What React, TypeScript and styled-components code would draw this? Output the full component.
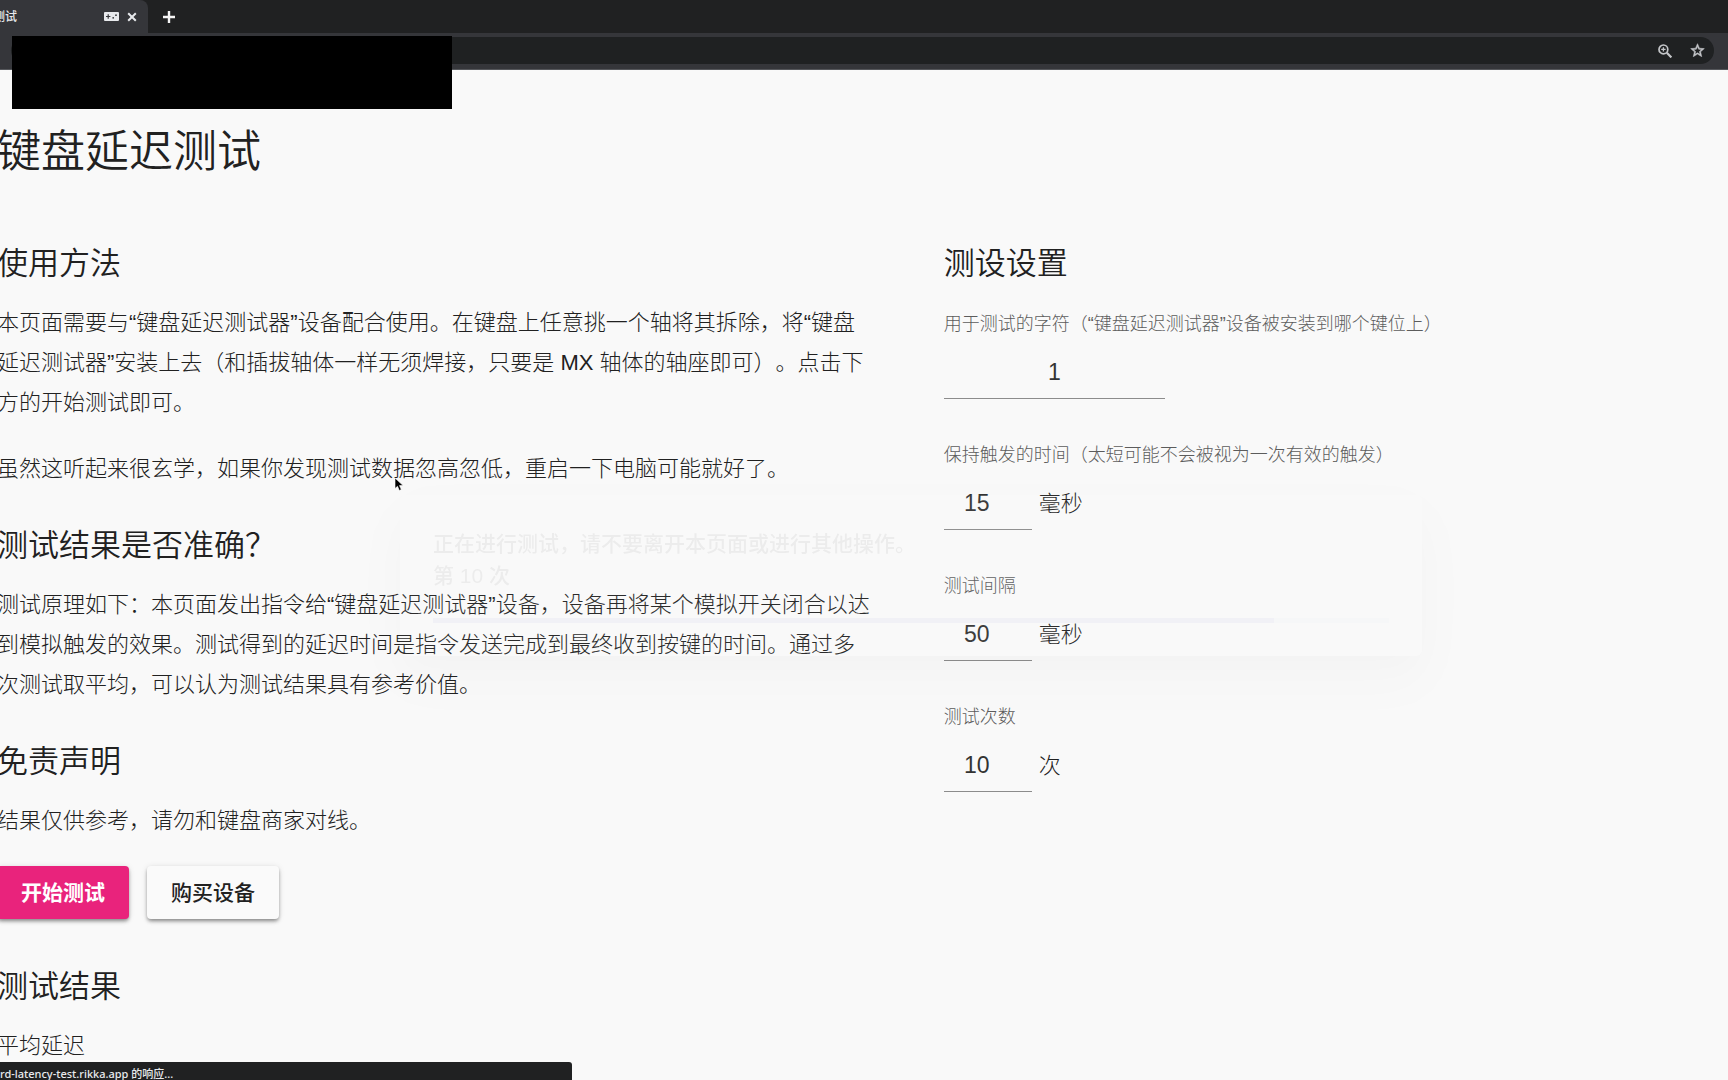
import React, { useState } from "react";
import styled, { createGlobalStyle, css } from "styled-components";

const sans = `"Liberation Sans", "Noto Sans CJK SC", sans-serif`;
const chromeSans = `"Noto Sans", "Noto Sans CJK SC", sans-serif`;

const GlobalStyle = createGlobalStyle`
  *, *::before, *::after { box-sizing: border-box; }
  body {
    margin: 0;
    overflow: hidden;
    background: #f9f9f9;
    color: #212121;
    font-family: ${sans};
    font-weight: 300;
    text-spacing-trim: space-all;
  }
  h1, h2, p { margin: 0; }
`;

const Frame = styled.div`
  display: flex;
  flex-direction: column;
  min-height: 100vh;
  overflow: hidden;
`;

const TabStrip = styled.div`
  display: flex;
  height: 33px;
  background: #202122;
`;

const Tab = styled.div`
  display: flex;
  align-items: center;
  gap: 6px;
  width: 148px;
  padding-right: 9px;
  border-radius: 0 8px 0 0;
  background: #35363a;
  color: #e8eaed;
`;

const TabTitle = styled.span`
  flex: 1;
  margin-left: -7px;
  font: 500 12px/16px ${chromeSans};
`;

const IconButton = styled.button<{ $size: number }>`
  display: flex;
  align-items: center;
  justify-content: center;
  width: ${(p) => p.$size}px;
  height: ${(p) => p.$size}px;
  padding: 0;
  border: 0;
  background: none;
  color: inherit;
`;

const NewTab = styled.div`
  display: flex;
  align-items: center;
  padding-left: 11px;
  color: #f5f5f5;
`;

const Toolbar = styled.div`
  height: 37px;
  padding: 4px 14px 5px 11px;
  border-bottom: 1px solid #55575b;
  background: #35363a;
`;

const AddressBar = styled.div`
  display: flex;
  align-items: center;
  justify-content: flex-end;
  gap: 12px;
  height: 27px;
  padding-right: 7px;
  border-radius: 14px;
  background: #1f2122;
  color: #c4c6c9;
`;

const Redaction = styled.div`
  position: absolute;
  top: 36px;
  left: 12px;
  width: 440px;
  height: 73px;
  background: #000;
`;

const Page = styled.main`
  flex: 1;
  margin-left: -3px;
  padding: 52px 0 12px;
`;

const Title = styled.h1`
  margin-bottom: 62px;
  font-size: 44px;
  font-weight: 350;
  line-height: 60px;
`;

const Columns = styled.div`
  display: grid;
  grid-template-columns: 54.7% 1fr;
`;

const Guide = styled.div`
  padding-right: 72px;
`;

const Section = styled.section`
  & + & { margin-top: 37px; }
`;

const Heading = styled.h2`
  margin-bottom: 19px;
  font-size: 31px;
  font-weight: 350;
  line-height: 40px;
`;

const Paragraph = styled.p`
  font-size: 22px;
  line-height: 40px;
  & + & { margin-top: 26px; }
`;

const Actions = styled.div`
  display: flex;
  gap: 18px;
  margin: 25px 0 48px;
`;

const Action = styled.button<{ $primary?: boolean }>`
  min-width: 132px;
  height: 53px;
  padding: 0 22px;
  border: 0;
  border-radius: 4px;
  background: #fafafa;
  color: #212121;
  font: 500 21px/32px ${sans};
  box-shadow: 0 3px 4px -1px rgba(0, 0, 0, 0.3), 0 2px 3px rgba(0, 0, 0, 0.14), 0 1px 6px rgba(0, 0, 0, 0.12);
  ${(p) => p.$primary && css`
    background: #e9237c;
    color: #fff;
    font-weight: 700;
  `}
`;

const Fields = styled.div`
  display: grid;
  gap: 44px;
  padding-top: 9px;
`;

const Label = styled.label`
  display: block;
  margin-bottom: 10px;
  color: #5c5c5c;
  font-size: 18px;
  line-height: 24px;
`;

const FieldRow = styled.div`
  display: flex;
  align-items: center;
  gap: 7px;
  font-size: 22px;
  line-height: 32px;
`;

const Input = styled.input<{ $short?: boolean }>`
  width: ${(p) => (p.$short ? 88 : 221)}px;
  height: 53px;
  padding: 0 ${(p) => (p.$short ? 22 : 0)}px 0 0;
  border: 0;
  border-bottom: 1px solid #8c8c8c;
  border-radius: 0;
  outline: 0;
  background: transparent;
  color: #333;
  font: 400 23px/32px ${sans};
  text-align: center;
`;

const StatusBubble = styled.div`
  position: fixed;
  bottom: 0;
  left: 0;
  width: 572px;
  height: 18px;
  border-radius: 0 3px 0 0;
  background: #202122;
  color: #e8eaed;
  font: 500 11px/24px ${chromeSans};
  white-space: nowrap;
  overflow: hidden;
`;

const FadingDialog = styled.div`
  position: fixed;
  top: 495px;
  left: 400px;
  right: 306px;
  padding: 33px;
  border-radius: 6px;
  background: #fff;
  opacity: 0.05;
  pointer-events: none;
  font-size: 21px;
  font-weight: 500;
  line-height: 32px;
  color: #000;
  box-shadow: 0 15px 21px -10px rgba(0, 0, 0, 0.2), 0 33px 52px 4px rgba(0, 0, 0, 0.2), 0 12px 63px 11px rgba(0, 0, 0, 0.2);
`;

const Track = styled.div`
  height: 5px;
  margin-top: 26px;
  background: #c5cae9;
`;

const Bar = styled.div`
  width: 88%;
  height: 100%;
  background: #5c66c9;
`;

const Pointer = styled.svg`
  position: fixed;
  top: 477px;
  left: 394px;
  pointer-events: none;
`;

const settings = [
  { id: "char", label: "用于测试的字符（“键盘延迟测试器”设备被安装到哪个键位上）", value: "1" },
  { id: "hold", label: "保持触发的时间（太短可能不会被视为一次有效的触发）", value: "15", unit: "毫秒" },
  { id: "interval", label: "测试间隔", value: "50", unit: "毫秒" },
  { id: "count", label: "测试次数", value: "10", unit: "次" },
];

function Setting({ id, label, initial, unit }: { id: string; label: string; initial: string; unit?: string }) {
  const [value, setValue] = useState(initial);
  return (
    <div>
      <Label htmlFor={id}>{label}</Label>
      <FieldRow>
        <Input id={id} $short={Boolean(unit)} value={value} onChange={(e) => setValue(e.target.value)} />
        {unit && <span>{unit}</span>}
      </FieldRow>
    </div>
  );
}

function BrowserBar() {
  return (
    <header>
      <TabStrip>
        <Tab>
          <TabTitle>测试</TabTitle>
          <svg width="15" height="9" viewBox="0 0 15 9" aria-hidden="true">
            <rect width="15" height="9" rx="1" fill="currentColor" />
            <path d="M4.2 2.3v4.4M2 4.5h4.4" stroke="#35363a" strokeWidth="1.2" />
            <circle cx="9.2" cy="5.8" r="0.9" fill="#35363a" />
            <circle cx="12" cy="3.2" r="0.9" fill="#35363a" />
          </svg>
          <IconButton $size={14} aria-label="关闭标签页">
            <svg width="10" height="10" viewBox="0 0 10 10" stroke="currentColor" strokeWidth="2">
              <path d="M1.2 1.2l7.6 7.6M8.8 1.2l-7.6 7.6" />
            </svg>
          </IconButton>
        </Tab>
        <NewTab>
          <IconButton $size={20} aria-label="新标签页">
            <svg width="12" height="12" viewBox="0 0 12 12" stroke="currentColor" strokeWidth="2.4">
              <path d="M6 0v12M0 6h12" />
            </svg>
          </IconButton>
        </NewTab>
      </TabStrip>
      <Toolbar>
        <AddressBar>
          <IconButton $size={20} aria-label="缩放">
            <svg width="14" height="14" viewBox="0 0 14 14" fill="none" stroke="currentColor" strokeWidth="1.7">
              <circle cx="5.4" cy="5.4" r="4.4" />
              <path d="M8.8 8.8l4.6 4.6" strokeWidth="2.2" />
              <path d="M5.4 3.2v4.4M3.2 5.4h4.4" strokeWidth="1.3" />
            </svg>
          </IconButton>
          <IconButton $size={20} aria-label="收藏">
            <svg width="15" height="15" viewBox="1 1 22 22" fill="currentColor" stroke="currentColor" strokeWidth="0.8">
              <path d="M22 9.24l-7.19-.62L12 2 9.19 8.63 2 9.24l5.46 4.73L5.82 21 12 17.27 18.18 21l-1.63-7.03L22 9.24zM12 15.4l-3.76 2.27 1-4.28-3.32-2.88 4.38-.38L12 6.1l1.71 4.04 4.38.38-3.32 2.88 1 4.28L12 15.4z" />
            </svg>
          </IconButton>
        </AddressBar>
      </Toolbar>
      <Redaction />
    </header>
  );
}

export default function App() {
  return (
    <Frame lang="zh-CN">
      <GlobalStyle />
      <BrowserBar />
      <Page>
        <Title>键盘延迟测试</Title>
        <Columns>
          <Guide>
            <Section>
              <Heading>使用方法</Heading>
              <Paragraph>
                本页面需要与“键盘延迟测试器”设备配合使用。在键盘上任意挑一个轴将其拆除，将“键盘延迟测试器”安装上去（和插拔轴体一样无须焊接，只要是 MX 轴体的轴座即可）。点击下方的开始测试即可。
              </Paragraph>
              <Paragraph>虽然这听起来很玄学，如果你发现测试数据忽高忽低，重启一下电脑可能就好了。</Paragraph>
            </Section>
            <Section>
              <Heading>测试结果是否准确？</Heading>
              <Paragraph>
                测试原理如下：本页面发出指令给“键盘延迟测试器”设备，设备再将某个模拟开关闭合以达到模拟触发的效果。测试得到的延迟时间是指令发送完成到最终收到按键的时间。通过多次测试取平均，可以认为测试结果具有参考价值。
              </Paragraph>
            </Section>
            <Section>
              <Heading>免责声明</Heading>
              <Paragraph>结果仅供参考，请勿和键盘商家对线。</Paragraph>
            </Section>
            <Actions>
              <Action $primary>开始测试</Action>
              <Action>购买设备</Action>
            </Actions>
            <div>
              <Heading>测试结果</Heading>
              <Paragraph>平均延迟</Paragraph>
            </div>
          </Guide>
          <section>
            <Heading>测设设置</Heading>
            <Fields>
              {settings.map((s) => (
                <Setting key={s.id} id={s.id} label={s.label} initial={s.value} unit={s.unit} />
              ))}
            </Fields>
          </section>
        </Columns>
      </Page>
      <FadingDialog>
        <p>正在进行测试，请不要离开本页面或进行其他操作。</p>
        <p>第 10 次</p>
        <Track>
          <Bar />
        </Track>
      </FadingDialog>
      <StatusBubble>rd-latency-test.rikka.app 的响应...</StatusBubble>
      <Pointer width="11" height="15" viewBox="0 0 11 15" aria-hidden="true">
        <path d="M1 1v10.5l2.5-2.2 1.8 4.2 2-.9-1.8-4h3.6z" fill="#000" stroke="#fff" strokeWidth="0.6" />
      </Pointer>
    </Frame>
  );
}
